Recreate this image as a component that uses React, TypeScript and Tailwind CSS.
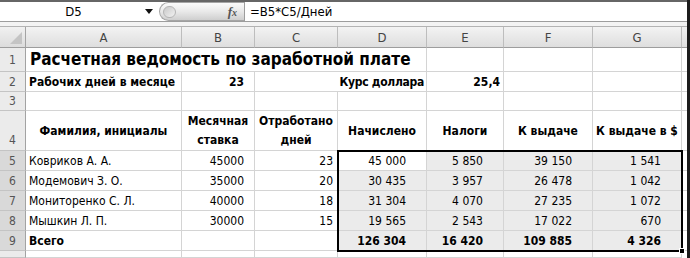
import type { ReactNode } from 'react'
import { clsx } from 'clsx'

const font = "font-['DejaVu_Sans_Condensed','Liberation_Sans',sans-serif]"

const people = [
  ['Ковриков А. А.', '45000', '23', '45 000', '5 850', '39 150', '1 541'],
  ['Модемович З. О.', '35000', '20', '30 435', '3 957', '26 478', '1 042'],
  ['Мониторенко С. Л.', '40000', '18', '31 304', '4 070', '27 235', '1 072'],
  ['Мышкин Л. П.', '30000', '15', '19 565', '2 543', '17 022', '670'],
]
const totals = ['126 304', '16 420', '109 885', '4 326']
const letters = ['A', 'B', 'C', 'D', 'E', 'F', 'G']

function Cell({ children, className }: { children?: ReactNode; className?: string }) {
  return (
    <div
      className={clsx(
        'flex items-center whitespace-nowrap border-r border-b border-[#d4d4d4] text-[12px] text-black',
        className,
      )}
    >
      {children}
    </div>
  )
}

function RowHead({ n, sel }: { n?: number; sel?: boolean }) {
  return (
    <div
      className={clsx(
        'flex items-center justify-center border-r border-b border-r-[#a3a3a3] border-b-[#c4c4c4] text-[12px] leading-none text-[#555]',
        sel ? 'bg-[#d9d9d9]' : 'bg-[#ebebeb]',
      )}
    >
      {n}
    </div>
  )
}

function FormulaBar() {
  return (
    <div className="flex h-[20px] items-stretch border-b border-[#9d9d9d] bg-white">
      <div className="flex w-[159px] items-center">
        <span className="flex-1 pl-[2px] text-center text-[13px] leading-none text-black">D5</span>
        <svg width="8" height="5" viewBox="0 0 8 5" className="mr-[6px]">
          <path d="M0 0h8L4 5z" fill="#111" />
        </svg>
      </div>
      <div className="flex w-[85px] items-center rounded-l-full border border-r-0 border-[#a5a5a5] bg-gradient-to-b from-[#fbfbfb] via-[#e9e9e9] to-[#cfcfcf] pl-[3px]">
        <span className="h-[12px] w-[13px] rounded-full border border-[#b5b5b5] bg-gradient-to-br from-[#c9c9c9] to-[#f2f2f2]" />
        <span className="ml-auto mr-[7px] font-['Liberation_Serif',serif] text-[13px] font-bold italic leading-none text-[#555]">
          f<span className="text-[10px]">x</span>
        </span>
      </div>
      <div className="flex flex-1 items-center border-l border-[#9d9d9d] pl-[5px] text-[13px] leading-none text-black">
        =B5*C5/Дней
      </div>
    </div>
  )
}

export default function App() {
  return (
    <div className={clsx('flex h-[258px] w-[690px] overflow-hidden bg-white', font)}>
      <div className="flex min-w-0 flex-1 flex-col">
        <div className="h-[2px] bg-[#666]" />
        <FormulaBar />
        <div className="h-[5px] border-b border-[#b3b3b3] bg-[#f3f3f3]" />

        <div className="relative grid flex-1 grid-cols-[26px_156px_73px_83px_89px_77px_89px_89px_1fr] grid-rows-[21px_24px_20px_19px_40px_20px_20px_20px_20px_20px_1fr]">
          {/* column headers */}
          <div className="relative border-r border-b border-r-[#a3a3a3] border-b-[#9d9d9d] bg-gradient-to-b from-[#f1f1f1] to-[#dcdcdc]">
            <svg width="12" height="12" viewBox="0 0 12 12" className="absolute right-[3px] bottom-[3px]">
              <path d="M12 0V12H0z" fill="#c4c4c4" />
            </svg>
          </div>
          {letters.map((l) => (
            <div
              key={l}
              className="flex items-center justify-center border-r border-b border-r-[#bdbdbd] border-b-[#9d9d9d] bg-gradient-to-b from-[#f3f3f3] to-[#dedede] text-[13px] leading-none text-[#444]"
            >
              {l}
            </div>
          ))}
          <div className="border-b border-[#9d9d9d] bg-gradient-to-b from-[#f3f3f3] to-[#dedede]" />

          {/* row 1 */}
          <RowHead n={1} />
          <Cell className="col-span-4 pl-[4px] text-[17px] font-bold">
            Расчетная ведомость по заработной плате
          </Cell>
          <Cell />
          <Cell />
          <Cell />
          <div className="border-b border-[#d4d4d4]" />

          {/* row 2 */}
          <RowHead n={2} />
          <Cell className="pl-[3px] font-bold">Рабочих дней в месяце</Cell>
          <Cell className="justify-end pr-[10px] font-bold">23</Cell>
          <Cell className="border-r-0" />
          <Cell className="justify-end pr-[2px] font-bold tracking-[-0.3px]">Курс доллара</Cell>
          <Cell className="justify-end pr-[3px] font-bold">25,4</Cell>
          <Cell />
          <Cell />
          <div className="border-b border-[#d4d4d4]" />

          {/* row 3 */}
          <RowHead n={3} />
          {letters.map((l) => (
            <Cell key={l} />
          ))}
          <div className="border-b border-[#d4d4d4]" />

          {/* row 4 */}
          <div className="flex items-end justify-center border-r border-b border-r-[#a3a3a3] border-b-[#c4c4c4] bg-[#ebebeb] pb-[4px] text-[12px] leading-none text-[#555]">
            4
          </div>
          <Cell className="justify-center font-bold">Фамилия, инициалы</Cell>
          <Cell className="flex-col justify-end font-bold">
            <span className="block h-[19px] leading-[19px]">Месячная</span>
            <span className="block h-[19px] leading-[19px]">ставка</span>
          </Cell>
          <Cell className="flex-col justify-end font-bold">
            <span className="block h-[19px] leading-[19px]">Отработано</span>
            <span className="block h-[19px] leading-[19px]">дней</span>
          </Cell>
          <Cell className="justify-center font-bold">Начислено</Cell>
          <Cell className="justify-center font-bold">Налоги</Cell>
          <Cell className="justify-center font-bold">К выдаче</Cell>
          <Cell className="justify-center font-bold">К выдаче в $</Cell>
          <div className="border-b border-[#d4d4d4]" />

          {/* rows 5-8 */}
          {people.map((p, i) => (
            <div key={p[0]} className="contents">
              <RowHead n={5 + i} sel />
              <Cell className="pl-[3px]">{p[0]}</Cell>
              <Cell className="justify-end pr-[10px]">{p[1]}</Cell>
              <Cell className="justify-end pr-[4px]">{p[2]}</Cell>
              {p.slice(3).map((v, j) => (
                <Cell
                  key={j}
                  className={clsx('justify-end pr-[20px]', i === 0 && j === 0 ? 'bg-white' : 'bg-[#ebebeb]')}
                >
                  {v}
                </Cell>
              ))}
              <div className="border-b border-[#d4d4d4]" />
            </div>
          ))}

          {/* row 9 */}
          <RowHead n={9} sel />
          <Cell className="pl-[3px] font-bold">Всего</Cell>
          <Cell />
          <Cell />
          {totals.map((v) => (
            <Cell key={v} className="justify-end bg-[#ebebeb] pr-[20px] font-bold">
              {v}
            </Cell>
          ))}
          <div className="border-b border-[#d4d4d4]" />

          {/* row 10 */}
          <RowHead />
          {letters.map((l) => (
            <Cell key={l} />
          ))}
          <div />

          {/* selection frame D5:G9 */}
          <div className="pointer-events-none absolute col-start-5 col-end-9 row-start-6 row-end-11 -inset-px border-2 border-black">
            <div className="absolute -right-[4px] -bottom-[4px] h-[6px] w-[6px] border border-white bg-black" />
          </div>
        </div>
      </div>
      <div className="w-[3px] bg-[#1c1c1c]" />
    </div>
  )
}
